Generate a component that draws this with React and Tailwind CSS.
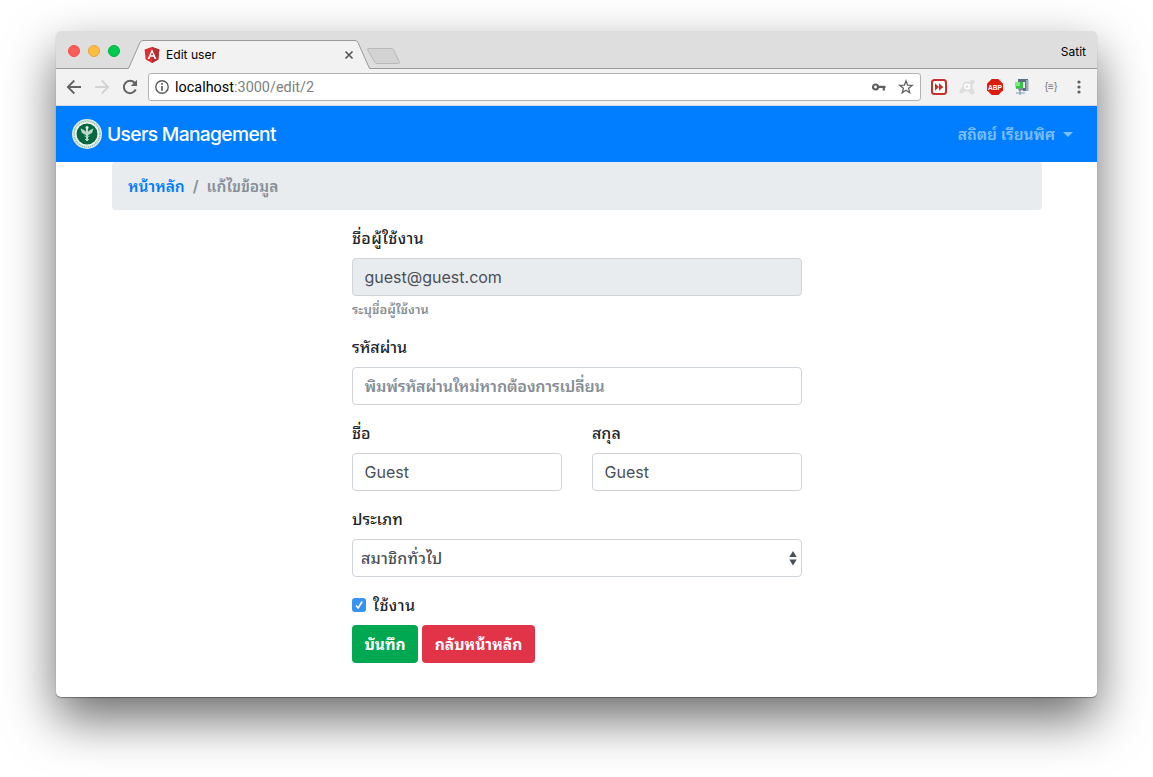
import React from "react";

const TH = "font-['Inter','Noto_Sans_Thai_Looped','Loma','Garuda','Waree','Noto_Sans_Thai','Noto_Sans',sans-serif]";

function AngularIcon() {
  return (
    <svg width="16" height="16" viewBox="0 0 16 16" className="shrink-0">
      <path d="M8 0 15.4 2.6 14.3 12.4 8 16 1.7 12.4.6 2.6Z" fill="#df2e31" />
      <path d="M8 0 15.4 2.6 14.3 12.4 8 16Z" fill="#b52e31" />
      <path d="M8 2 3.6 12h1.8l.9-2.2h3.4l.9 2.2h1.8ZM8 5.3 9.2 8.3H6.8Z" fill="#fff" />
    </svg>
  );
}

function TabStrip() {
  return (
    <div className="relative flex h-[38px] shrink-0 items-center bg-[#dedede]">
      <svg width="1041" height="38" viewBox="0 0 1041 38" className="absolute inset-0">
        <path d="M0 37.5H72.5L84 11.5Q85 9.5 87 9.5H299Q301 9.5 302 11.5L313.5 37.5H1041V38H0Z" fill="#f2f2f2" />
        <path d="M0 37.5H72.5L84 11.5Q85 9.5 87 9.5H299Q301 9.5 302 11.5L313.5 37.5H1041" fill="none" stroke="#999" />
        <path d="M313 17.5H335Q337 17.5 337.7 19L343.3 31Q344 32.5 342 32.5H321.5Q319.5 32.5 318.8 31L311.8 19Q311 17.5 313 17.5Z" fill="#d3d3d3" stroke="#b8b8b8" />
      </svg>
      <div className="relative flex w-full items-center pt-0.5">
        <div className="flex w-[88px] gap-2 pl-3">
          <span className="size-3 rounded-full border border-[#e9504d] bg-[#fc5b57]" />
          <span className="size-3 rounded-full border border-[#e5a63a] bg-[#fdbc40]" />
          <span className="size-3 rounded-full border border-[#00b342] bg-[#00c94f]" />
        </div>
        <div className="flex w-[210px] items-center pt-[7px]">
          <AngularIcon />
          <span className="ml-1.5 grow font-['Inter',sans-serif] text-[12.1px] leading-4 text-black">Edit user</span>
          <svg width="10" height="10" viewBox="0 0 10 10"><path d="m1.5 1.5 7 7m0-7-7 7" stroke="#555" strokeWidth="1.6" /></svg>
        </div>
        <span className="ml-auto mr-[11px] pt-0.5 font-['Inter',sans-serif] text-[12px] leading-4 text-black">Satit</span>
      </div>
    </div>
  );
}

function Toolbar() {
  return (
    <div className="flex h-[37px] shrink-0 items-center border-b border-[#d5d9de] bg-[#f2f2f2] pl-[10px]">
      <svg width="16" height="16" viewBox="0 0 16 16" fill="none" stroke="#636363" strokeWidth="1.8"><path d="M15 8H2M8.3 1.5 1.8 8l6.5 6.5" /></svg>
      <svg className="ml-3" width="16" height="16" viewBox="0 0 16 16" fill="none" stroke="#d2d2d2" strokeWidth="1.8"><path d="M1 8h13M7.7 1.5 14.2 8l-6.5 6.5" /></svg>
      <svg className="ml-3" width="16" height="16" viewBox="0 0 16 16"><path d="M13.7 10.5A6.2 6.2 0 1 1 12.6 3.8" fill="none" stroke="#636363" strokeWidth="2" /><path d="M15 .8V7H8.8Z" fill="#636363" /></svg>
      <div className="ml-[10px] flex h-7 w-[773px] items-center rounded-[3px] border border-[#b3b3b3] bg-white px-[6px]">
        <svg width="14" height="14" viewBox="0 0 14 14"><circle cx="7" cy="7" r="6.2" fill="none" stroke="#5a5a5a" strokeWidth="1.4" /><path d="M7 3v1.7M7 6v4.8" stroke="#5a5a5a" strokeWidth="1.7" /></svg>
        <span className="ml-[6px] grow pt-0.5 font-['Roboto',sans-serif] text-[14.4px] leading-5 tracking-[0.02px] text-[#808080]"><span className="text-black">localhost</span>:3000/edit/2</span>
        <svg width="15" height="10" viewBox="0 0 15 10"><circle cx="4.5" cy="5" r="2.5" fill="none" stroke="#5f5f5f" strokeWidth="2.2" /><path d="M7.5 4.8h7M12.8 5v3.5" stroke="#5f5f5f" strokeWidth="2.2" /></svg>
        <svg className="ml-3" width="16" height="16" viewBox="0 0 16 16"><path d="M8 1.9 9.6 6.2l4.6.2-3.6 2.9 1.2 4.4L8 11.2 4.2 13.7l1.2-4.4-3.6-2.9 4.6-.2Z" fill="none" stroke="#5f5f5f" strokeWidth="1.3" /></svg>
      </div>
      <svg className="ml-[10px]" width="16" height="16" viewBox="0 0 16 16"><rect x="1" y="1" width="14" height="14" rx="2.5" fill="#fff" stroke="#c8302c" strokeWidth="2" /><path d="M4 4.3 8 8l-4 3.7ZM8 4.3 12.3 8 8 11.7Z" fill="#c8302c" /></svg>
      <svg className="ml-3" width="16" height="16" viewBox="0 0 16 16"><path d="M5 3 11 2.5Q12.5 0 14.5.8 16.5 2.2 15 4.5L13.5 6 14 10.5Q16.5 12 15 14.5 13 16.5 11 14.5L9 12 5 13Q2.5 15.5.5 13.5-.5 10.5 2.5 9.5Z" fill="#dedede" /><circle cx="8" cy="7.5" r="2.2" fill="none" stroke="#fff" strokeWidth="1.4" /><path d="M10.5 5v5.3" stroke="#fff" strokeWidth="1.3" /></svg>
      <svg className="ml-3 overflow-visible" width="16" height="16" viewBox="0 0 16 16"><path d="M4.7 0h6.6L16 4.7v6.6L11.3 16H4.7L0 11.3V4.7Z" fill="#dc1a0e" /><text x="8" y="10.7" textAnchor="middle" fill="#fff" fontSize="7.2" fontWeight="700" fontFamily="Liberation Sans" textLength="14" lengthAdjust="spacingAndGlyphs">ABP</text></svg>
      <svg className="ml-3" width="16" height="16" viewBox="0 0 16 16"><path d="M3 0h10v12H8V9h2V3H3Z" fill="#587084" /><path d="M11 1h2.5v11H11Z" fill="#9aacba" /><path d="M0 3h8v6L1 10Z" fill="#35c443" /><path d="M0 3h5v4H0Z" fill="#7fec7c" /><path d="M3 9.5 8 9v2l-4 1Z" fill="#6f8291" /><path d="M5 11v5M1 14h9" stroke="#789aaf" strokeWidth="1.2" /></svg>
      <span className="ml-3 w-4 text-center font-['Liberation_Sans',sans-serif] text-[10px] leading-4 text-[#777]">{"{≡}"}</span>
      <svg className="ml-3" width="16" height="16" viewBox="0 0 16 16" fill="#5f5f5f"><circle cx="8" cy="3" r="1.6" /><circle cx="8" cy="8" r="1.6" /><circle cx="8" cy="13" r="1.6" /></svg>
    </div>
  );
}

function Seal() {
  return (
    <svg width="30" height="30" viewBox="0 0 30 30">
      <circle cx="15" cy="15" r="15" fill="#dcebe6" />
      <circle cx="15" cy="15" r="12.9" fill="none" stroke="#86b5a0" strokeWidth="1.4" strokeDasharray="1 1" />
      <circle cx="15" cy="15" r="11.5" fill="#f4faf7" />
      <circle cx="15" cy="15" r="10.5" fill="#07683f" />
      <path d="M15 8v14" stroke="#d6e8df" strokeWidth="1.8" />
      <path d="M8.5 9.5 12 11l3 2.5 3-2.5 3.5-1.5L20 14l-3 1.5-2 1.5-2-1.5L10 14Z" fill="#b9d8c9" />
      <path d="M12.5 17Q15 18.5 17.5 17M13 20.5h4" fill="none" stroke="#a9cfbd" />
      <circle cx="15" cy="8.5" r="1.5" fill="#e4f1ea" />
    </svg>
  );
}

function Field({ label, value, muted, disabled, labelClass = "" }) {
  return (
    <label className="block">
      <span className={`mb-2 block h-6 leading-6 ${labelClass}`}>{label}</span>
      <span className={`flex h-[38px] items-center rounded border border-[#ced4da] px-[11.5px] ${disabled ? "bg-[#e9ecef]" : "bg-white"} ${muted ? "font-semibold tracking-[-0.16px] text-[#868e96]" : "font-normal text-[#495057]"}`}>{value}</span>
    </label>
  );
}

export default function App() {
  return (
    <div className="h-[777px] w-full overflow-hidden bg-white pl-[56px] pt-[31px]">
      <div className="flex h-[666px] w-[1041px] flex-col overflow-hidden rounded-[5px] bg-white shadow-[0_1px_1px_rgba(0,0,0,0.35),0_22px_50px_rgba(0,0,0,0.58)]">
        <TabStrip />
        <Toolbar />
        <nav className={`flex h-14 shrink-0 items-center bg-[#007eff] pl-4 pr-6 ${TH}`}>
          <Seal />
          <span className="ml-[5px] text-[19.2px] font-medium tracking-[-0.64px] text-white">Users Management</span>
          <span className="ml-auto pt-0.5 text-[15.5px] font-semibold text-[#80bfff]">สถิตย์ เรียนพิศ</span>
          <span className="ml-2 border-x-[5px] border-t-[5px] border-x-transparent border-t-[#80bfff]" />
        </nav>
        <main className={`text-[16px] font-medium text-[#212529] ${TH}`}>
          <div className="mb-4 ml-14 flex h-12 w-[930px] items-center rounded bg-[#e9ecef] px-4 pt-0.5 text-[15.5px] font-semibold">
            <span className="text-[#007bff]">หน้าหลัก</span>
            <span className="px-2 text-[#868e96]">/</span>
            <span className="tracking-[-0.05px] text-[#868e96]">แก้ไขข้อมูล</span>
          </div>
          <form className="ml-[296px] flex w-[450px] flex-col">
            <Field label="ชื่อผู้ใช้งาน" labelClass="tracking-[0.3px]" value="guest@guest.com" disabled />
            <span className="mb-4 mt-1 h-[19px] text-[12.8px] font-semibold leading-[19px] text-[#868e96]">ระบุชื่อผู้ใช้งาน</span>
            <Field label="รหัสผ่าน" value="พิมพ์รหัสผ่านใหม่หากต้องการเปลี่ยน" muted />
            <div className="my-4 grid grid-cols-2 gap-[30px]">
              <Field label="ชื่อ" value="Guest" />
              <Field label="สกุล" value="Guest" />
            </div>
            <span className="mb-2 h-6 leading-6">ประเภท</span>
            <div className="flex h-[38px] items-center justify-between rounded border border-[#ced4da] pl-2 pr-1 text-[#495057]">
              <span className="tracking-[0.2px]">สมาชิกทั่วไป</span>
              <svg width="8" height="16" viewBox="0 0 8 16" fill="#495057"><path d="M4 1 7.7 7H.3ZM4 15.5.3 9.5h7.4Z" /></svg>
            </div>
            <div className="mb-2 mt-4 flex h-6 items-center">
              <svg width="14" height="14" viewBox="0 0 14 14"><rect width="14" height="14" rx="3" fill="#3693f4" /><path d="m4 7.5 2.2 2.5L10.2 3.5" fill="none" stroke="#fff" strokeWidth="1.6" /></svg>
              <span className="ml-[7px] tracking-[0.4px]">ใช้งาน</span>
            </div>
            <div className="flex gap-1 text-[15.5px] font-bold text-white">
              <span className="flex h-[38px] w-[66px] items-center justify-center rounded bg-[#00a851] pt-0.5">บันทึก</span>
              <span className="flex h-[38px] w-[113px] items-center justify-center rounded bg-[#e23449] pt-0.5">กลับหน้าหลัก</span>
            </div>
          </form>
        </main>
      </div>
    </div>
  );
}
